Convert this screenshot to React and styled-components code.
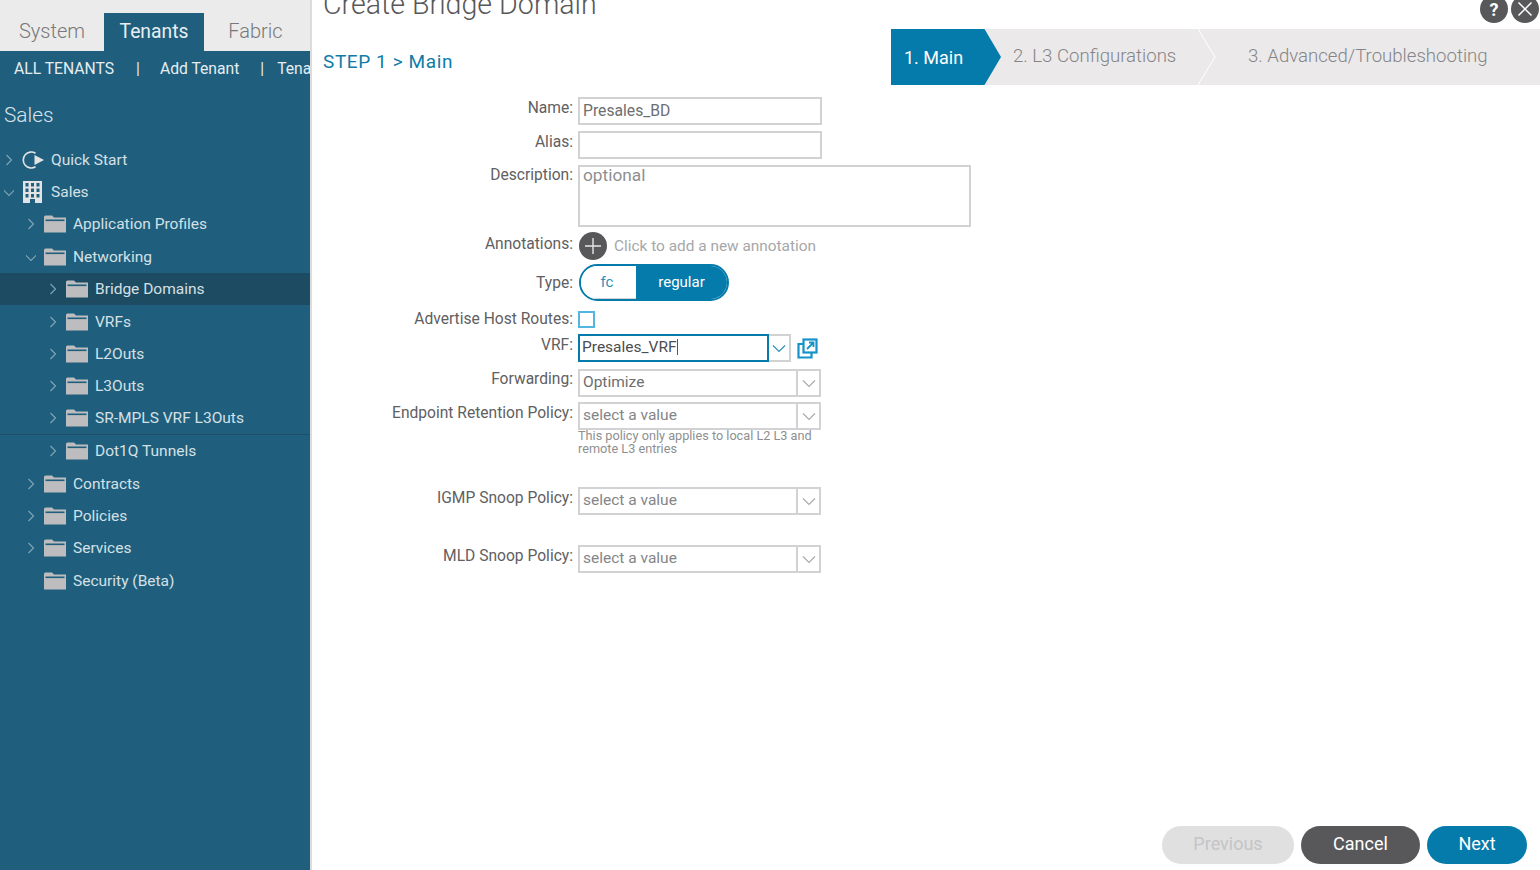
import React from 'react'
import styled, { createGlobalStyle } from 'styled-components'

const GlobalStyle = createGlobalStyle`
    html, body {
        margin: 0;
        padding: 0;
        background: #fff;
    }
    body {
        font-family: Roboto, "Liberation Sans", sans-serif;
        font-weight: 300;
        color: #58585a;
    }
`;

const Page = styled.div`
    display: flex;
    width: 1540px;
    height: 870px;
    overflow: hidden;
`;

const Sidebar = styled.aside`
    display: flex;
    flex-direction: column;
    flex: none;
    width: 310px;
    background: #1f5f7d;
    border-right: 2px solid #dcdcdc;
    overflow: hidden;
`;

const TabBar = styled.div`
    display: flex;
    height: 38px;
    padding-top: 13px;
    background: #ebebeb;
`;

const Tab = styled.div`
    display: flex;
    align-items: center;
    justify-content: center;
    width: ${p => p.$width}px;
    padding-bottom: 2px;
    font-size: ${p => (p.$active ? 19.3 : 20)}px;
    color: ${p => (p.$active ? '#e8eff3' : '#77787a')};
    background: ${p => (p.$active ? '#1f5f7d' : 'transparent')};
    font-weight: ${p => (p.$active ? 400 : 300)};
`;

const SubNav = styled.nav`
    display: flex;
    align-items: center;
    height: 34px;
    padding-left: 14px;
    font-size: 15.7px;
    font-weight: 400;
    color: #e6edf1;
    white-space: nowrap;
`;

const SubNavSep = styled.span`
    margin: 0 ${p => p.$right}px 0 ${p => p.$left}px;
`;

const SidebarTitle = styled.div`
    margin-top: 17px;
    padding-left: 4px;
    height: 26px;
    line-height: 26px;
    font-size: 20.8px;
    color: #d9e3e9;
`;

const Tree = styled.div`
    margin-top: 15.5px;
`;

const TreeRow = styled.div`
    display: flex;
    align-items: center;
    box-sizing: border-box;
    height: 32.4px;
    padding-left: ${p => p.$level * 22 + 4}px;
    font-size: 15.5px;
    font-weight: 400;
    color: #d5e0e6;
    white-space: nowrap;
    background: ${p => (p.$selected ? '#1d4b62' : 'transparent')};
    border-bottom: ${p => (p.$divider ? '1px solid #1d4f69' : 'none')};
`;

const Arrow = styled.svg`
    flex: none;
    width: 10px;
    height: 14px;
    margin-right: ${p => (p.$level ? 8 : 7)}px;
    visibility: ${p => (p.$hidden ? 'hidden' : 'visible')};
`;

const RowIcon = styled.svg`
    flex: none;
    margin-right: 7px;
`;

const Main = styled.main`
    position: relative;
    display: flex;
    flex-direction: column;
    flex: 1;
    min-width: 0;
`;

const DialogTitle = styled.h1`
    margin: -11px 0 0 11px;
    height: 31px;
    line-height: 31px;
    font-size: 28.6px;
    font-weight: 300;
    color: #58585a;
    white-space: nowrap;
`;

const TopActions = styled.div`
    position: absolute;
    top: -5px;
    right: 1px;
    display: flex;
    gap: 3px;
`;

const RoundAction = styled.div`
    display: flex;
    align-items: center;
    justify-content: center;
    width: 28px;
    height: 28px;
    border-radius: 50%;
    background: #58585b;
    color: #fff;
    font-size: 18px;
    font-weight: 700;
`;

const HeaderRow = styled.div`
    display: flex;
    align-items: flex-start;
    justify-content: space-between;
    height: 56px;
    margin-top: 9px;
`;

const StepTitle = styled.div`
    margin: 21px 0 0 11px;
    font-size: 19px;
    letter-spacing: 0.6px;
    font-weight: 400;
    line-height: 24px;
    color: #0f7ca8;
    white-space: nowrap;
`;

const Wizard = styled.div`
    display: flex;
    align-items: center;
    width: 649px;
    height: 56px;
    background: #ebe9ea;
    font-size: 18.6px;
    white-space: nowrap;
`;

const ActiveStep = styled.div`
    display: flex;
    align-items: center;
    box-sizing: border-box;
    width: 110px;
    height: 56px;
    padding-left: 13px;
    background: #047bab;
    color: #fff;
    font-size: 18px;
    font-weight: 400;
    clip-path: polygon(0 0, 85% 0, 100% 50%, 85% 100%, 0 100%);
`;

const IdleStep = styled.div`
    padding-left: ${p => p.$pad}px;
    padding-bottom: 2px;
    width: ${p => p.$width}px;
    box-sizing: border-box;
    color: #848587;
    font-weight: 300;
`;

const StepDivider = styled.svg`
    flex: none;
    width: 18px;
    height: 56px;
`;

const Form = styled.div`
    display: flex;
    flex-direction: column;
    margin-top: 12px;
`;

const Row = styled.div`
    display: grid;
    grid-template-columns: 261px 1fr;
    column-gap: 5px;
    margin-top: ${p => p.$top || 0}px;
    align-items: start;
`;

const Label = styled.label`
    padding-top: ${p => p.$pad ?? 1}px;
    text-align: right;
    font-size: 15.6px;
    font-weight: 400;
    line-height: 20px;
    color: #5f6062;
    white-space: nowrap;
`;

const TextBox = styled.div`
    box-sizing: border-box;
    width: ${p => p.$width || 244}px;
    height: ${p => p.$height || 28}px;
    padding: ${p => p.$padTop ?? 2}px 3px;
    border: 2px solid #d2d2d4;
    font-size: ${p => p.$size || 15.7}px;
    line-height: ${p => p.$lineHeight || 20}px;
    font-weight: 400;
    color: ${p => (p.$muted ? '#8e8f91' : '#6d6e70')};
`;

const InlineRow = styled.div`
    display: flex;
    align-items: center;
`;

const AddCircle = styled.div`
    display: flex;
    align-items: center;
    justify-content: center;
    flex: none;
    width: 28px;
    height: 28px;
    margin-left: 1px;
    border-radius: 50%;
    background: #58585b;
`;

const Hint = styled.span`
    margin-left: 7px;
    padding-bottom: 1px;
    font-size: 15.4px;
    font-weight: 400;
    color: #a6a7a9;
`;

const Toggle = styled.div`
    display: flex;
    box-sizing: border-box;
    width: 150px;
    height: 37px;
    margin-left: 1px;
    border: 2px solid #047bab;
    border-radius: 19px;
    overflow: hidden;
    font-size: 15px;
    font-weight: 400;
`;

const ToggleOption = styled.div`
    display: flex;
    align-items: center;
    justify-content: center;
    box-sizing: border-box;
    padding-bottom: 2px;
    padding-right: ${p => (p.$on ? 0 : 3)}px;
    width: ${p => p.$width}px;
    color: ${p => (p.$on ? '#fff' : '#2b90b8')};
    background: ${p => (p.$on ? '#047bab' : '#fff')};
    box-shadow: ${p => (p.$on ? 'none' : 'inset 0 -1px 0 #d2d2d4')};
`;

const CheckBox = styled.div`
    box-sizing: border-box;
    width: 17px;
    height: 17px;
    margin-top: 2px;
    border: 2px solid #53b6e0;
`;

const Select = styled.div`
    display: flex;
    box-sizing: border-box;
    width: 243px;
    height: 28px;
    border: 2px solid #d2d2d4;
    font-size: 15.5px;
    font-weight: 400;
`;

const SelectValue = styled.div`
    flex: 1;
    padding: 1px 3px;
    line-height: 20px;
    color: ${p => (p.$muted ? '#848587' : '#6d6e70')};
`;

const SelectArrow = styled.div`
    display: flex;
    align-items: center;
    justify-content: center;
    flex: none;
    width: 21px;
    border-left: 2px solid #d2d2d4;
`;

const VrfInput = styled.div`
    box-sizing: border-box;
    width: 191px;
    height: 28px;
    padding: 1px 2px;
    border: 2px solid #047bab;
    line-height: 20px;
    font-size: 15.5px;
    font-weight: 400;
    color: #4d4d4f;
`;

const Caret = styled.span`
    display: inline-block;
    width: 1px;
    height: 16px;
    vertical-align: -3px;
    background: #58585a;
`;

const VrfArrow = styled.div`
    display: flex;
    align-items: center;
    justify-content: center;
    box-sizing: border-box;
    width: 22px;
    height: 28px;
    border: 2px solid #d2d2d4;
    border-left: none;
`;

const LinkIcon = styled.svg`
    margin-left: 6px;
`;

const HelpText = styled.div`
    width: 250px;
    margin-top: -1px;
    font-size: 12.7px;
    font-weight: 400;
    line-height: 13px;
    color: #8e8f91;
`;

const Footer = styled.footer`
    display: flex;
    justify-content: flex-end;
    gap: 7px;
    margin-top: auto;
    padding: 0 13px 6px 0;
`;

const FootButton = styled.button`
    width: ${p => p.$width}px;
    height: 38px;
    padding: 0 0 4px;
    border: none;
    border-radius: 19px;
    background: ${p => p.$bg};
    color: ${p => p.$color};
    font-family: inherit;
    font-size: 18px;
    font-weight: 400;
`;

const ChevronRight = ({ hidden, level }) => (
    <Arrow viewBox="0 0 10 14" $hidden={hidden} $level={level}>
        <path d="M2.5 2 L7.5 7 L2.5 12" fill="none" stroke="#7fa3b5" strokeWidth="1.2" />
    </Arrow>
);

const ChevronDown = ({ level }) => (
    <Arrow viewBox="0 0 10 14" $level={level}>
        <path d="M-1 4.5 L5 10.5 L11 4.5" fill="none" stroke="#7fa3b5" strokeWidth="1.2" />
    </Arrow>
);

const FolderIcon = () => (
    <RowIcon width="22" height="18" viewBox="0 0 22 18">
        <path d="M0 2 Q0 0.5 1.5 0.5 H8 L10 2.5 H22 V17.5 H0 Z" fill="#bdbdbf" />
        <rect x="1.5" y="4.5" width="19" height="1.6" fill="#1f5f7d" />
    </RowIcon>
);

const BuildingIcon = () => (
    <RowIcon width="23" height="24" viewBox="0 0 23 24">
        <path d="M2 1 H21 V23 H14 V19 H9 V23 H2 Z" fill="#e3e3e5" />
        {[3, 8.5, 14].map(y => [4.5, 10, 15.5].map(x => (
            <rect key={`${x}-${y}`} x={x} y={y} width="3" height="3.5" fill="#1f5f7d" />
        )))}
    </RowIcon>
);

const QuickStartIcon = () => (
    <RowIcon width="23" height="20" viewBox="0 0 23 20">
        <path d="M14.5 3.2 A8 8 0 1 0 14.5 16.8" fill="none" stroke="#e3e3e5" strokeWidth="1.6" />
        <path d="M13.5 5 L23 10 L13.5 15 Z" fill="#e3e3e5" />
    </RowIcon>
);

const SmallChevron = ({ color = '#a9aaac' }) => (
    <svg width="14" height="9" viewBox="0 0 14 9">
        <path d="M1 1.5 L7 7.5 L13 1.5" fill="none" stroke={color} strokeWidth="1.2" />
    </svg>
);

const treeItems = [
    { label: 'Quick Start', level: 0, icon: 'quick', arrow: 'right' },
    { label: 'Sales', level: 0, icon: 'building', arrow: 'down' },
    { label: 'Application Profiles', level: 1, arrow: 'right' },
    { label: 'Networking', level: 1, arrow: 'down' },
    { label: 'Bridge Domains', level: 2, arrow: 'right', selected: true },
    { label: 'VRFs', level: 2, arrow: 'right' },
    { label: 'L2Outs', level: 2, arrow: 'right' },
    { label: 'L3Outs', level: 2, arrow: 'right' },
    { label: 'SR-MPLS VRF L3Outs', level: 2, arrow: 'right', divider: true },
    { label: 'Dot1Q Tunnels', level: 2, arrow: 'right' },
    { label: 'Contracts', level: 1, arrow: 'right' },
    { label: 'Policies', level: 1, arrow: 'right' },
    { label: 'Services', level: 1, arrow: 'right' },
    { label: 'Security (Beta)', level: 1, arrow: 'none' },
];

const SelectField = ({ value, muted }) => (
    <Select>
        <SelectValue $muted={muted}>{value}</SelectValue>
        <SelectArrow><SmallChevron /></SelectArrow>
    </Select>
);

const App = () => {
    return (
        <Page>
            <GlobalStyle />
            <Sidebar>
                <TabBar>
                    <Tab $width={104}>System</Tab>
                    <Tab $width={100} $active>Tenants</Tab>
                    <Tab $width={103}>Fabric</Tab>
                </TabBar>
                <SubNav>
                    ALL TENANTS<SubNavSep $left={22} $right={20}>|</SubNavSep>Add Tenant<SubNavSep $left={21} $right={13}>|</SubNavSep>Tena
                </SubNav>
                <SidebarTitle>Sales</SidebarTitle>
                <Tree>
                    {treeItems.map(item => (
                        <TreeRow key={item.label} $level={item.level} $selected={item.selected} $divider={item.divider}>
                            {item.arrow === 'down'
                                ? <ChevronDown level={item.level} />
                                : <ChevronRight level={item.level} hidden={item.arrow === 'none'} />}
                            {item.icon === 'quick' && <QuickStartIcon />}
                            {item.icon === 'building' && <BuildingIcon />}
                            {!item.icon && <FolderIcon />}
                            {item.label}
                        </TreeRow>
                    ))}
                </Tree>
            </Sidebar>
            <Main>
                <DialogTitle>Create Bridge Domain</DialogTitle>
                <TopActions>
                    <RoundAction>?</RoundAction>
                    <RoundAction>
                        <svg width="16" height="16" viewBox="0 0 16 16">
                            <path d="M1.5 1.5 L14.5 14.5 M14.5 1.5 L1.5 14.5" stroke="#fff" strokeWidth="1.5" />
                        </svg>
                    </RoundAction>
                </TopActions>
                <HeaderRow>
                    <StepTitle>STEP 1 &gt; Main</StepTitle>
                    <Wizard>
                        <ActiveStep>1. Main</ActiveStep>
                        <IdleStep $pad={12} $width={197}>2. L3 Configurations</IdleStep>
                        <StepDivider viewBox="0 0 18 56">
                            <path d="M0 0 L17 28 L0 56" fill="none" stroke="#fff" strokeWidth="1" />
                        </StepDivider>
                        <IdleStep $pad={32}>3. Advanced/Troubleshooting</IdleStep>
                    </Wizard>
                </HeaderRow>
                <Form>
                    <Row>
                        <Label>Name:</Label>
                        <TextBox>Presales_BD</TextBox>
                    </Row>
                    <Row $top={6}>
                        <Label>Alias:</Label>
                        <TextBox />
                    </Row>
                    <Row $top={6}>
                        <Label $pad={0}>Description:</Label>
                        <TextBox $width={393} $height={62} $size={17.3} $padTop={0} $lineHeight={16} $muted>optional</TextBox>
                    </Row>
                    <Row $top={5}>
                        <Label $pad={2}>Annotations:</Label>
                        <InlineRow>
                            <AddCircle>
                                <svg width="16" height="16" viewBox="0 0 16 16">
                                    <path d="M8 0 V16 M0 8 H16" stroke="#e6e6e6" strokeWidth="1.4" />
                                </svg>
                            </AddCircle>
                            <Hint>Click to add a new annotation</Hint>
                        </InlineRow>
                    </Row>
                    <Row $top={4}>
                        <Label $pad={9}>Type:</Label>
                        <Toggle>
                            <ToggleOption $width={55}>fc</ToggleOption>
                            <ToggleOption $width={91} $on>regular</ToggleOption>
                        </Toggle>
                    </Row>
                    <Row $top={8}>
                        <Label $pad={0}>Advertise Host Routes:</Label>
                        <CheckBox />
                    </Row>
                    <Row $top={5}>
                        <Label $pad={1}>VRF:</Label>
                        <InlineRow>
                            <VrfInput>Presales_VRF<Caret /></VrfInput>
                            <VrfArrow><SmallChevron color="#2b90b8" /></VrfArrow>
                            <LinkIcon width="21" height="21" viewBox="0 0 21 21">
                                <path d="M6 6 H1.5 V19.5 H14.5 V15" fill="none" stroke="#1493c8" strokeWidth="2.2" />
                                <rect x="6.5" y="1.5" width="13" height="13" fill="none" stroke="#1493c8" strokeWidth="2.2" />
                                <path d="M10 11 L16 5 M12 4.5 H16.5 V9" fill="none" stroke="#1493c8" strokeWidth="1.8" />
                            </LinkIcon>
                        </InlineRow>
                    </Row>
                    <Row $top={7}>
                        <Label $pad={0}>Forwarding:</Label>
                        <SelectField value="Optimize" />
                    </Row>
                    <Row $top={5}>
                        <Label $pad={1}>Endpoint Retention Policy:</Label>
                        <div>
                            <SelectField value="select a value" muted />
                            <HelpText>This policy only applies to local L2 L3 and remote L3 entries</HelpText>
                        </div>
                    </Row>
                    <Row $top={32}>
                        <Label $pad={1}>IGMP Snoop Policy:</Label>
                        <SelectField value="select a value" muted />
                    </Row>
                    <Row $top={30}>
                        <Label $pad={1}>MLD Snoop Policy:</Label>
                        <SelectField value="select a value" muted />
                    </Row>
                </Form>
                <Footer>
                    <FootButton $width={132} $bg="#e0e0e0" $color="#c4c4c6">Previous</FootButton>
                    <FootButton $width={119} $bg="#58585b" $color="#fff">Cancel</FootButton>
                    <FootButton $width={100} $bg="#047bab" $color="#fff">Next</FootButton>
                </Footer>
            </Main>
        </Page>
    );
}

export default App
